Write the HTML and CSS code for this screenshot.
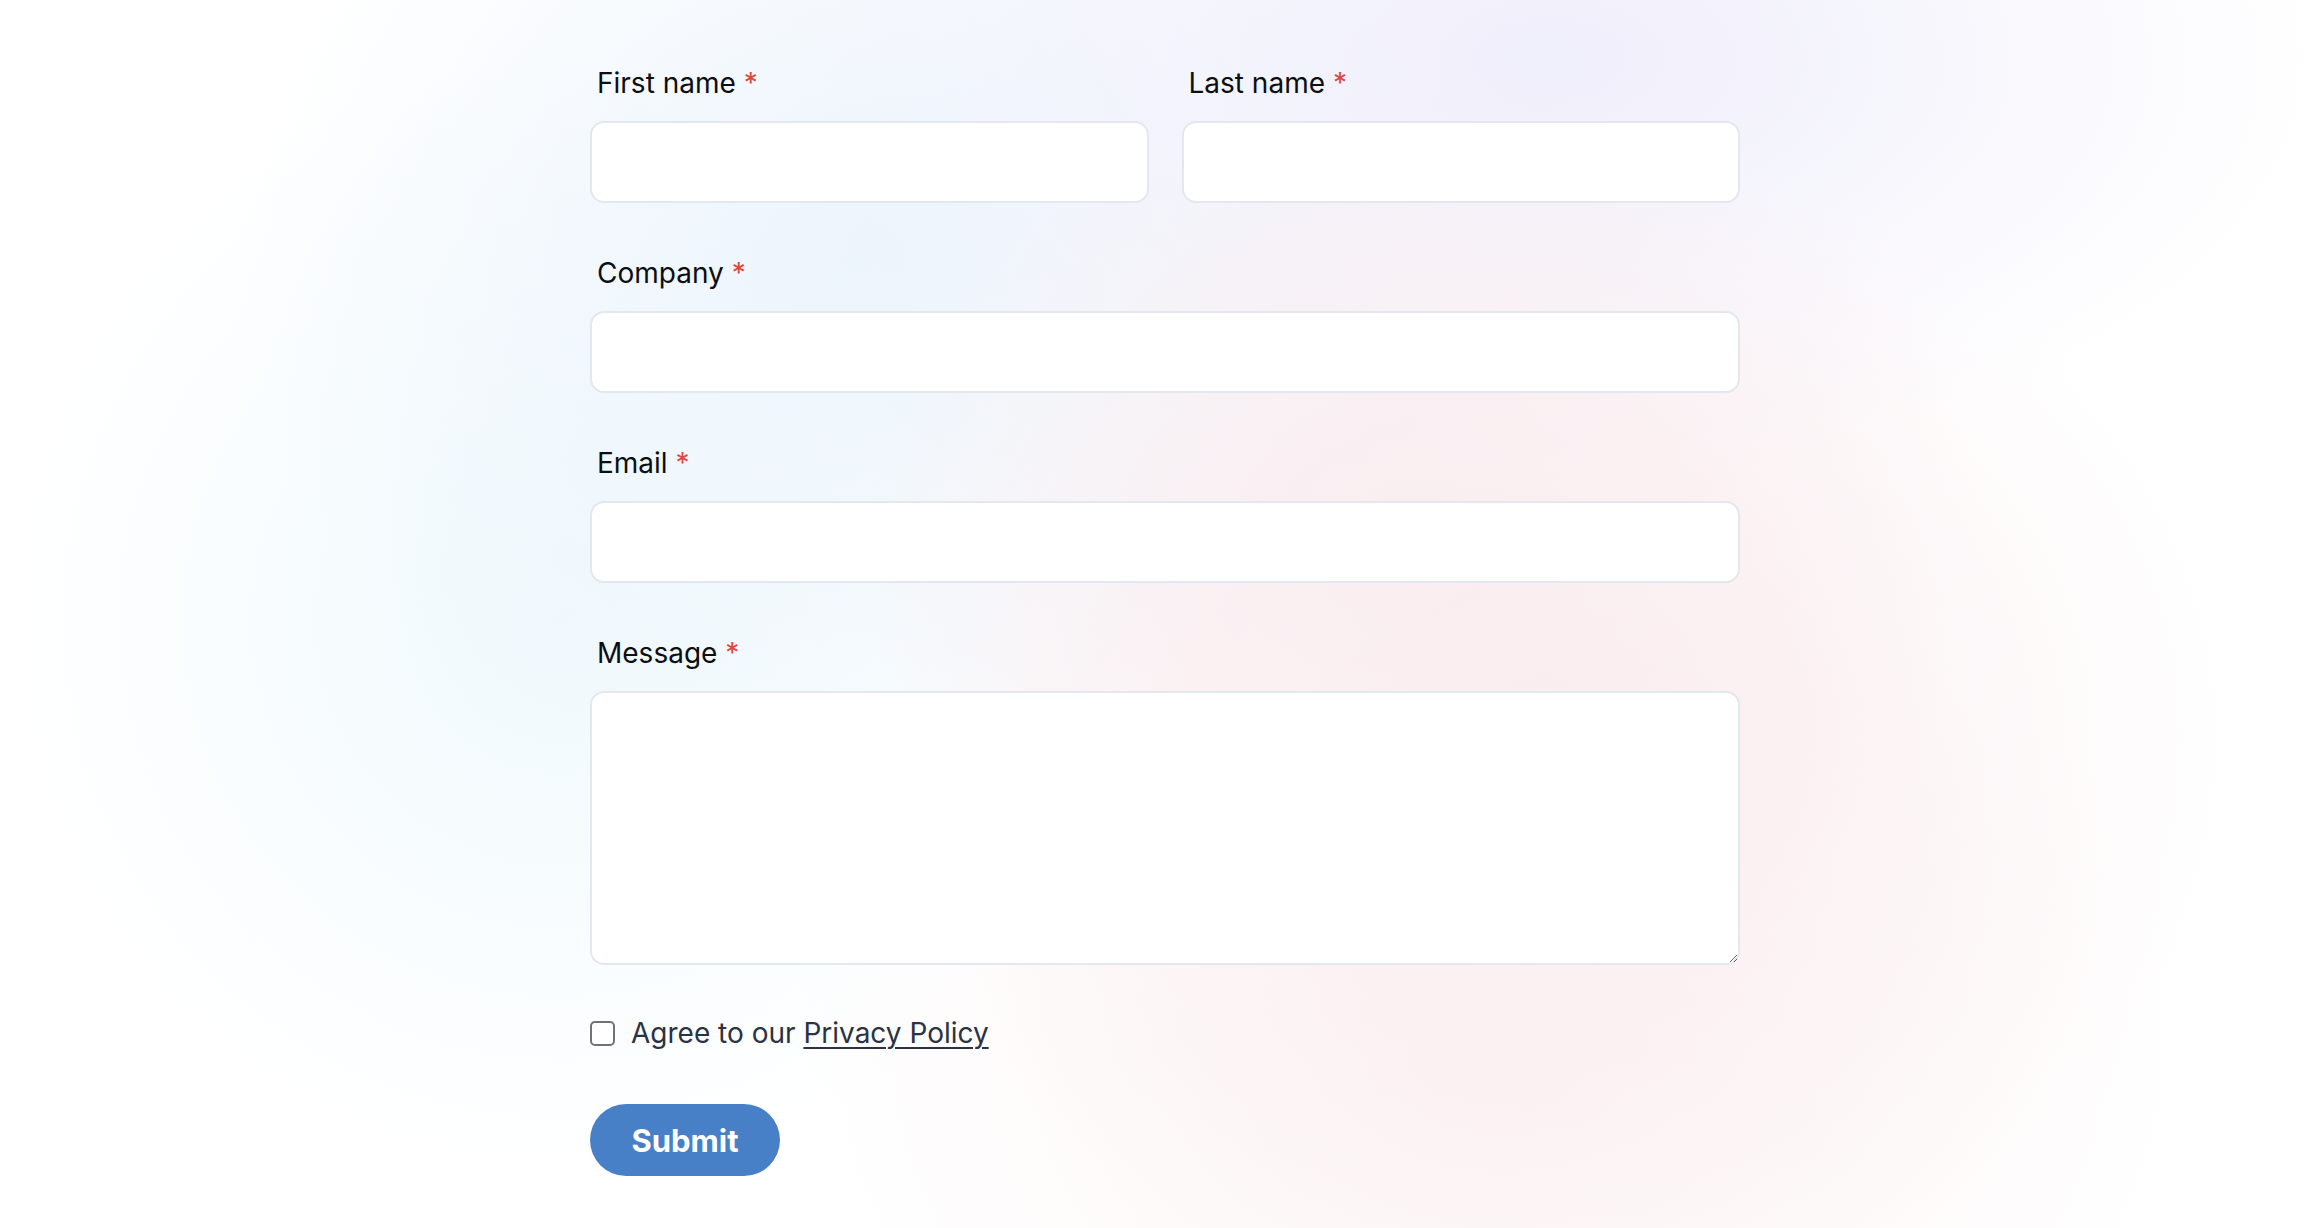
FILE: index.html
```html
<!DOCTYPE html>
<html lang="en">
<head>
<meta charset="utf-8">
<title>Contact form</title>
<link rel="stylesheet" href="styles.css">
</head>
<body>
<div class="bg"></div>
<main class="wrap">
  <form class="form">
    <div class="row">
      <div class="field">
        <label class="label" for="first">First name <span class="req">*</span></label>
        <input class="input" id="first" type="text">
      </div>
      <div class="field">
        <label class="label" for="last">Last name <span class="req">*</span></label>
        <input class="input" id="last" type="text">
      </div>
    </div>
    <div class="field">
      <label class="label" for="company">Company <span class="req">*</span></label>
      <input class="input" id="company" type="text">
    </div>
    <div class="field">
      <label class="label" for="email">Email <span class="req">*</span></label>
      <input class="input" id="email" type="email">
    </div>
    <div class="field field-last">
      <label class="label" for="message">Message <span class="req">*</span></label>
      <textarea class="input textarea" id="message"></textarea>
    </div>
    <label class="agree">
      <input class="check" type="checkbox">
      <span>Agree to our <a class="link" href="#">Privacy Policy</a></span>
    </label>
    <div class="actions">
      <button class="submit" type="button">Submit</button>
    </div>
  </form>
</main>
</body>
</html>
```
FILE: styles.css
```css
* { box-sizing: border-box; }
html, body { margin: 0; padding: 0; height: 100%; }
body {
  font-family: Inter, "Noto Sans", "Liberation Sans", sans-serif;
  background: #ffffff;
  overflow: hidden;
  position: relative;
}
.bg {
  position: absolute;
  inset: 0;
  z-index: 0;
  background:
    radial-gradient(ellipse 680px 580px at 1560px 740px, rgba(250,237,239,1), rgba(250,237,239,0) 100%),
    radial-gradient(ellipse 560px 460px at 1420px 540px, rgba(248,236,240,0.95), rgba(248,236,240,0) 100%),
    radial-gradient(ellipse 700px 520px at 1500px 1050px, rgba(251,240,240,0.8), rgba(251,240,240,0) 100%),
    radial-gradient(ellipse 780px 420px at 1550px 60px, rgba(239,238,251,1), rgba(239,238,251,0) 100%),
    radial-gradient(ellipse 620px 560px at 860px 260px, rgba(236,244,252,1), rgba(236,244,252,0) 100%),
    radial-gradient(ellipse 560px 560px at 560px 620px, rgba(240,249,253,1), rgba(240,249,253,0) 100%);
}
.wrap {
  position: relative;
  z-index: 1;
  width: 1168px;
  margin: 0 auto;
  padding: 62px 0 0 18px;
}
.form {
  display: flex;
  flex-direction: column;
  width: 1150px;
}
.row {
  display: grid;
  grid-template-columns: 1fr 1fr;
  column-gap: 33px;
}
.field {
  display: flex;
  flex-direction: column;
  margin-bottom: 49px;
}
.field-last { margin-bottom: 0; }
.label {
  display: block;
  font-size: 28px;
  line-height: 42px;
  color: #0c0e12;
  padding-left: 7px;
  margin-bottom: 17px;
}
.req { color: #e0483e; }
.input {
  display: block;
  width: 100%;
  height: 82px;
  border: 2px solid #e3e7ef;
  border-radius: 14px;
  background: #ffffff;
  font: inherit;
  font-size: 27px;
  padding: 0 20px;
  outline: none;
}
.textarea {
  height: 274px;
  padding: 16px 20px;
  resize: vertical;
}
.agree {
  display: flex;
  align-items: center;
  height: 42px;
  margin-top: 47px;
  font-size: 28px;
  color: #2b3342;
}
.check {
  appearance: none;
  -webkit-appearance: none;
  width: 25px;
  height: 25px;
  margin: 0 16px 0 0;
  border: 2.5px solid #727272;
  border-radius: 5px;
  background: #ffffff;
  flex: none;
}
.link { color: #2b3342; text-decoration: underline; text-underline-offset: 4px; text-decoration-thickness: 2px; }
.actions { margin-top: 50px; }
.submit {
  height: 72px;
  width: 190px;
  border: 0;
  border-radius: 36px;
  background: #4780c7;
  color: #ffffff;
  font-family: Inter, "Noto Sans", "Liberation Sans", sans-serif;
  font-weight: 700;
  font-size: 31px;
  padding: 0;
  cursor: pointer;
}
```
